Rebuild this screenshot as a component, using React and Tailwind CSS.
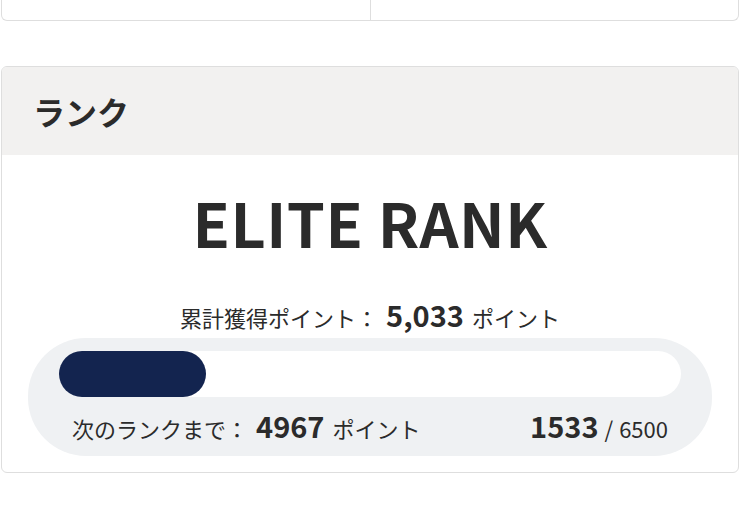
import React from "react";

const current = 1533;
const goal = 6500;

export default function App() {
  const pct = (current / goal) * 100;

  return (
    <div
      className="min-h-screen bg-white px-px text-[#2b2b2b]"
      style={{ fontFamily: '"Noto Sans CJK JP", "Noto Sans", sans-serif' }}
    >
      {/* previous card (only its bottom edge is visible) */}
      <div className="flex h-[21px] rounded-b-md border border-t-0 border-[#dedede]">
        <div className="flex-1 border-r border-[#dedede]" />
        <div className="flex-1" />
      </div>

      {/* rank card */}
      <div className="mt-[45px] overflow-hidden rounded-md border border-[#dedede]">
        <div className="flex h-[88px] items-center bg-[#f2f1f0] pl-[31px]">
          <h2 className="text-[32px] font-bold leading-none">ランク</h2>
        </div>

        <div className="flex flex-col items-center px-[26px] pb-[16px] pt-[36px]">
          <p className="text-[61px] font-bold leading-none tracking-[0.5px]">ELITE RANK</p>

          <p className="mt-[48px] flex items-baseline text-[22px] leading-none">
            累計獲得ポイント：
            <span className="ml-[8px] mr-[8px] text-[29px] font-bold">5,033</span>
            ポイント
          </p>

          <div className="mt-[9px] w-full rounded-[58px] bg-[#eff1f3] px-[31px] pb-[16px] pt-[13px]">
            <div className="h-[46px] w-full rounded-full bg-white">
              <div
                className="h-full rounded-full bg-[#13244f]"
                style={{ width: `${pct}%` }}
              />
            </div>
            <div className="mt-[14px] flex items-baseline justify-between px-[13px] leading-none">
              <p className="flex items-baseline text-[22px]">
                次のランクまで：
                <span className="ml-[8px] mr-[8px] text-[29px] font-bold">4967</span>
                ポイント
              </p>
              <p className="flex items-baseline text-[22px]">
                <span className="mr-[6px] text-[29px] font-bold">{current}</span>/
                <span className="ml-[6px]">{goal}</span>
              </p>
            </div>
          </div>
        </div>
      </div>
    </div>
  );
}
